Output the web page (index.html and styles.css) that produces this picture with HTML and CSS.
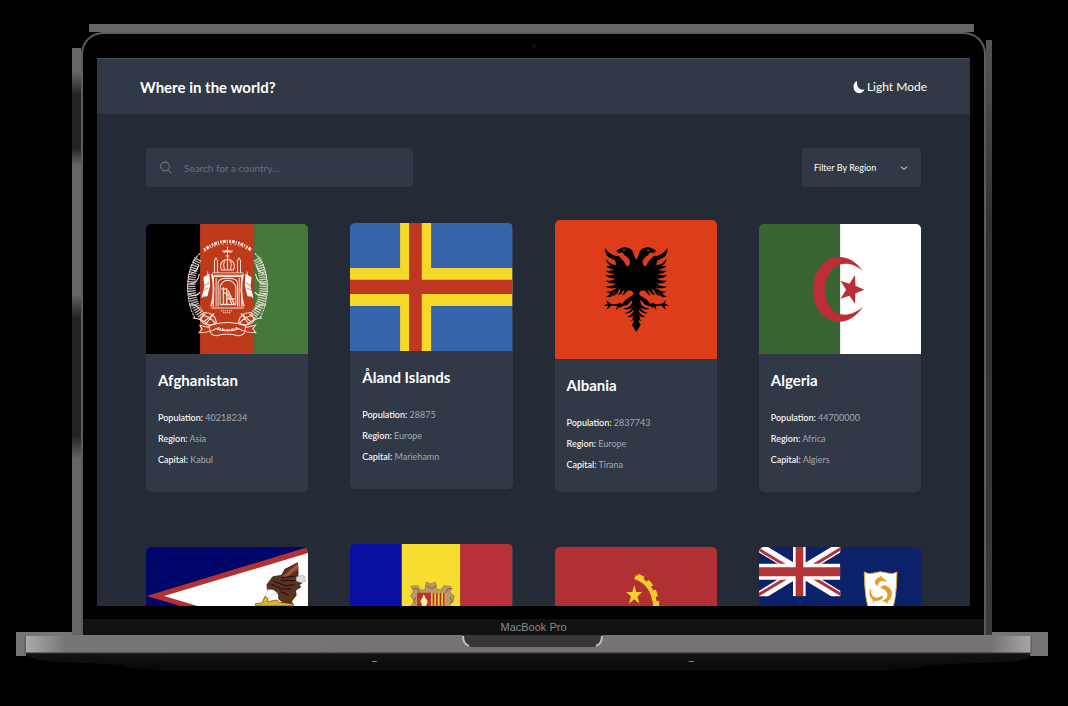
FILE: index.html
```html
<!DOCTYPE html>
<html lang="en">
<head>
<meta charset="utf-8">
<meta name="viewport" content="width=device-width, initial-scale=1">
<title>Where in the world?</title>
<link rel="stylesheet" href="styles.css">
</head>
<body>
<div class="laptop">
  <div class="lid">
    <span class="edge edge-top"></span>
    <span class="edge edge-left"></span>
    <span class="edge edge-right"></span>
    <div class="camera-bar"><span class="camera"></span></div>
    <div class="screen">
      <header class="topbar">
        <h1 class="brand">Where in the world?</h1>
        <button class="mode" type="button">
          <svg class="moon" viewBox="0 0 12 14" aria-hidden="true"><path d="M4 1C1.600 2.200.400 4.400.500 7c.200 3.600 2.700 6.200 5.800 6.200 2.200 0 4.100-1.300 5.200-3.600C7.300 10.400 3.200 7.400 4 1z" fill="#fff"/></svg>
          Light Mode
        </button>
      </header>
      <main class="content">
        <div class="controls">
          <label class="search">
            <svg class="search-icon" viewBox="0 0 12 13" aria-hidden="true"><circle cx="5" cy="5.500" r="4.400"/><path d="M8.200 9 11.200 12.300"/></svg>
            <input type="text" placeholder="Search for a country..." aria-label="Search for a country">
          </label>
          <div class="filter">
            <select aria-label="Filter By Region"><option>Filter By Region</option></select>
            <svg class="chevron" viewBox="0 0 8 6" aria-hidden="true"><path d="M1 1.500 4 4.500 7 1.500"/></svg>
          </div>
        </div>
        <div class="grid">
          <article class="card">
            <svg class="flag" viewBox="18 40 486 391" preserveAspectRatio="none" role="img" aria-label="Flag of Afghanistan">
              <path d="M18 40h163v391H18z" fill="#000"/><path d="M180 40h162v391H180z" fill="#be3a19"/><path d="M342 40h162v391H342z" fill="#45793a"/>
              <g fill="none" stroke="#f3e3dc" stroke-width="3">
                <path d="M192 118q70-52 142 0" stroke-width="9" stroke-dasharray="5 3 9 3 3 4"/>
                <path d="M190 125q70-50 146 0" stroke-width="2" stroke-dasharray="7 5"/>
                <path d="M180 128C136 168 130 260 166 325M344 128c44 40 50 132 14 197" stroke-dasharray="8 2"/>
                <path d="M174 145C142 205 150 275 188 320M350 145c32 60 24 130-14 175" stroke-width="24" stroke-dasharray="4 3" opacity=".8"/>
                <path d="M150 220q22 0 28-30M146 250q22 12 34-5M147 285q18-8 32 12M374 220q-22 0-28-30M378 250q-22 12-34-5M377 285q-18-8-32 12M152 190q18-5 24-26M372 190q-18-5-24-26"/>
                <path d="M246 121h32M250 126q12-6 24 0M262 108v38M256 136h12"/>
                <path d="M244 178q-8-20 8-29 10-5 20 0 16 9 8 29zM262 145v35M253 150q-5 14 0 28M271 150q5 14 0 28"/>
                <path d="M223 186v-34q5-20 9 0v34M292 186v-34q5-20 9 0v34M216 187h94M220 194h86"/>
                <path d="M220 290v-92h84v92M228 288v-86M234 288v-70q0-15 28-15 30 0 30 15v70M297 202v86"/>
                <path d="M215 190q12 50-2 98M309 190q-12 50 2 98" stroke-width="5"/>
                <path d="M240 284v-55q5-19 23-20 18 1 24 20v55M214 293h97"/>
                <path d="M242 282h44M244 235h16v45M247 248h13M250 230v50M264 240l18 40M263 250l12 30M260 265h24" stroke-width="4"/>
                <path d="M203 183v25l-17 54M321 183v25l17 54"/>
                <path d="M242 301h36M249 307h22" stroke-dasharray="4 2"/>
                <path d="M192 306q33 0 37 30-26 18-48-6zM332 306q-33 0-37 30 26 18 48-6z"/>
                <path d="M186 315q23 2 40 23M191 334q18-13 31-25M197 341l24-31M338 315q-23 2-40 23M333 334q-18-13-31-25M327 341l-24-31"/>
                <path d="M158 323q30 2 50 23 54-20 108 0 20-21 50-23M178 344q22 7 32 7M178 344l8 11-9 12q35 0 50-12 35 14 70 0 15 12 50 12l-9-12 8-11q-22 7-32 7M208 346q-2 30 22 30 28-10 64 0 24 0 22-30" />
                <path d="M232 352q30 14 60 0" stroke-width="6" stroke-dasharray="6 2 3 3"/>
              </g>
              <path d="M190 200l18-10 2 35-8 32-17 2 8-30zM334 200l-18-10-2 35 8 32 17 2-8-30z" fill="#fff"/>
              <path d="M193 225l14-8M190 240l14-8M331 225l-14-8M334 240l-14-8" stroke="#be3a19" stroke-width="2"/>
            </svg>
            <div class="card-body">
              <h2>Afghanistan</h2>
              <p><b>Population:</b> 40218234</p><p><b>Region:</b> Asia</p><p><b>Capital:</b> Kabul</p>
            </div>
          </article>
          <article class="card card-centered">
            <svg class="flag flag-short" viewBox="30 42 486 384" preserveAspectRatio="none" role="img" aria-label="Flag of Åland Islands">
              <path d="M30 42h486v384H30z" fill="#3765ac"/><path d="M180 42h93v384h-93zM30 177h486v114H30z" fill="#f6d829"/><path d="M207 42h38v384h-38zM30 212h486v43H30z" fill="#be3720"/>
            </svg>
            <div class="card-body">
              <h2>Åland Islands</h2>
              <p><b>Population:</b> 28875</p><p><b>Region:</b> Europe</p><p><b>Capital:</b> Mariehamn</p>
            </div>
          </article>
          <article class="card">
            <svg class="flag flag-tall" viewBox="43 29 487 418" preserveAspectRatio="none" role="img" aria-label="Flag of Albania">
              <defs>
                <g id="half-eagle">
                  <path d="M288 150q-4-4-8-16-3-16-16-21-12-5-24 1l-9 5-6 5 11-1-7 6 17-2 6 8q12 6 15 14 4 19-9 19-6-14-17-24l-12-8-1 17 2 80 16 7 28 2 5 8-15 22 12-1-6 20 14 15-9 17 13 23z"/>
                  <path d="M238 140q-25-4-36-16-5-5-8-11-3 18 10 28 14 10 34 12z"/>
                  <path d="M234 165q-27 1-38-20 2 17 15 22-9 1-14 0 9 10 24 11-9 5-26 3 12 12 31 9-15 8-31 4 8 13 32 10-14 10-32 7 10 11 32 8-10 10-32 10 13 10 35 2-9 13-34 14 13 8 37-3l8-12z"/>
                  <path d="M236 138v90h-11v-10l5-6v-13l-9 0 9-6v-14l-9 0 6-16-6-20z"/>
                  <path d="M212 243q-4 12-16 16 11 7 22-7l8-17zM228 232q-2 17-14 26 15-1 22-22zM241 232q-3 15-10 23 14-2 19-20zM254 232q-3 16-10 24 14-5 19-22z"/>
                  <path d="M274 257l-17 10-14 15-4-5-17 8 16 5-5 6 10-7 18-5 14-17z"/>
                  <path d="M240 284l-30-3-13-11 4 10-12 7 14 0-5 13 14-14 18 2-5 14 12-15z"/>
                  <path d="M278 270q-5 22-30 25 14 8 32-7zM279 283q-6 21-27 26 18 6 29-15zM281 297q-4 18-21 23 14 5 24-13zM285 309q-2 17-15 23 11 1 18-11z"/>
                </g>
              </defs>
              <path d="M43 29h487v418H43z" fill="#dd3d1a"/>
              <use href="#half-eagle"/><use href="#half-eagle" transform="translate(574 0) scale(-1 1)"/>
              <path d="M287 322l13 22-13 22-13-22z"/>
              <path d="M247 120h8M319 120h8" stroke="#dd3d1a" stroke-width="3"/>
            </svg>
            <div class="card-body card-body-tight">
              <h2>Albania</h2>
              <p><b>Population:</b> 2837743</p><p><b>Region:</b> Europe</p><p><b>Capital:</b> Tirana</p>
            </div>
          </article>
          <article class="card">
            <svg class="flag" viewBox="24 41 488 390" preserveAspectRatio="none" role="img" aria-label="Flag of Algeria">
              <path d="M24 41h245v390H24z" fill="#396434"/><path d="M268 41h244v390H268z" fill="#fff"/>
              <path d="M336 183C312 145 275 132 242 144c-36 14-56 52-56 94s20 80 56 92c34 12 70-2 96-42-28 26-61 32-84 17-20-13-31-38-31-67s11-56 31-69c24-15 57-11 82 14z" fill="#bb2e36"/>
              <path d="M341 238l-27 11-1 32-17-25-27 9 17-27-17-27 27 9 17-26 1 32z" fill="#bb2e36"/>
            </svg>
            <div class="card-body">
              <h2>Algeria</h2>
              <p><b>Population:</b> 44700000</p><p><b>Region:</b> Africa</p><p><b>Capital:</b> Algiers</p>
            </div>
          </article>
          <article class="card">
            <svg class="flag" viewBox="18 36 486 390" preserveAspectRatio="none" role="img" aria-label="Flag of American Samoa">
              <path d="M18 36h486v390H18z" fill="#01066a"/><path d="M504 36v290L20 183 504 36z" fill="#b23232"/><path d="M504 54v258L72 183z" fill="#fff"/>
              <path d="M472 83l-38 20-10 18-26 4-18 24 2 16 18 2 15 11 1 15 10 7-4 10 36-1-4-10 14-18-2-15 16-10-6-6 9-6-7-5 4-9-10-4 2-10z" fill="#5b321d" stroke="#20120b" stroke-width="2"/>
              <path d="M472 86l-44 37 7 7 40-30z" fill="#a15335"/>
              <path d="M424 128l45-5M421 136l44 1M400 138l35 14 27-3M393 147l32 16 26-2M421 170l25 10" stroke="#1e110b" stroke-width="3" fill="none"/>
              <path d="M468 125l19-4 8 6-4 5 6 5-12 7-17-5z" fill="#ddd" stroke="#555"/>
              <path d="M383 163l17 2 13 10-18 3-10 13-11-2z" fill="#fff" stroke="#888"/>
              <path d="M374 184l9 6-1 10 28-5 8 7 42 5v6H346v-7l20-2z" fill="#e0b329" stroke="#58420d" stroke-width="2"/>
            </svg>
          </article>
          <article class="card">
            <svg class="flag flag-medium" viewBox="630 27 486 399" preserveAspectRatio="none" role="img" aria-label="Flag of Andorra">
              <path d="M630 27h156v399H630z" fill="#0710a0"/><path d="M785 27h176v399H785z" fill="#f8dd31"/><path d="M960 27h156v399H960z" fill="#b83038"/>
              <path d="M813 154l20-2 8 14 14-1 3-24 14 6 14-6 4 21 13 3 8-13 21 2-2 17 12 12-3 17-11 5 10 18-20 30H824l-25-32 17-11 6-13-11-14 9-13z" fill="#b99b69" stroke="#8c7147" stroke-width="2"/>
              <path d="M818 162q18-6 20 13M937 162q-18-6-20 13M860 151q14 18 28 0M828 187q-12 12-2 19M929 187q12 12 2 19" fill="none" stroke="#80643b" stroke-width="3"/>
              <path d="M831 173h42v80h-42z" fill="#bd342c"/><path d="M873 173h43v80h-43z" fill="#efc93b"/>
              <path d="M880 173v80M890 173v80M901 173v80M911 173v80" stroke="#ad3026" stroke-width="5"/>
              <path d="M845 207q-8-8 1-17l5-12 5 11q11 10 3 20l-3 10h-9z" fill="#fff0a0"/>
            </svg>
          </article>
          <article class="card">
            <svg class="flag" viewBox="43 36 487 390" preserveAspectRatio="none" role="img" aria-label="Flag of Angola">
              <path d="M43 36h487v195H43z" fill="#b03033"/><path d="M43 231h487v195H43z" fill="#000"/>
              <g fill="none" stroke="#f4c92b"><path d="M283 126q58 20 61 94" stroke-width="12"/><path d="M291 121q60 25 59 95" stroke-width="11" stroke-dasharray="20 14"/></g>
              <path d="M281 150l6 21h18l-14 13 5 22-15-13-16 13 6-22-15-13h19z" fill="#f4d02b"/>
            </svg>
          </article>
          <article class="card">
            <svg class="flag" viewBox="655 36 487 390" preserveAspectRatio="none" role="img" aria-label="Flag of Anguilla">
              <defs><clipPath id="canton"><path d="M655 36h244v148H655z"/></clipPath></defs>
              <path d="M655 36h487v390H655z" fill="#0b216a"/>
              <g clip-path="url(#canton)">
                <path d="M655 36l244 148M899 36L655 184" stroke="#fff" stroke-width="28"/>
                <path d="M650 40l120 73M903 180l-120-73M908 36l-124 76M646 184l125-75" stroke="#b23237" stroke-width="9"/>
                <path d="M757 36h38v148h-38zM655 86h244v48H655z" fill="#fff"/><path d="M765 36h23v148h-23zM655 97h244v27H655z" fill="#b23237"/>
              </g>
              <path d="M971 111q14 9 28 3l21-4 21 4q14 6 28-3-1 93-19 122-16 17-30 23-14-6-30-23-18-29-19-122z" fill="#fff" stroke="#d9a83a" stroke-width="3"/>
              <g fill="#e39d2c"><path d="M1003 146q-1-16 14-20l5-4 2 5 18 13-16-2q-11 1-13 9l-4 6z"/><path d="M1026 151q23 1 28 21 1 18-13 27l1 8-8-7-10-1 11-7q10-8 3-20-6-10-19-12z"/><path d="M985 161l7 5q-2 14 8 20 11 6 26-5l1 9q-14 11-24 7l-6 7-1-10q-14-13-8-25z"/></g>
            </svg>
          </article>
        </div>
      </main>
    </div>
    <div class="chin">MacBook Pro</div>
  </div>
  <svg class="base" viewBox="16 632 1032 44" preserveAspectRatio="none" aria-hidden="true">
    <defs>
      <linearGradient id="metal"><stop offset="0" stop-color="#aaa"/><stop offset=".04" stop-color="#777576"/><stop offset=".5" stop-color="#777274"/><stop offset=".96" stop-color="#777274"/><stop offset="1" stop-color="#aaa6a8"/></linearGradient>
      <linearGradient id="under" x2="0" y2="1"><stop offset="0" stop-color="#151315"/><stop offset="1" stop-color="#080708"/></linearGradient>
    </defs>
    <path d="M24 652h1010q-3 10-32 10l-72 3q-20 6-60 6H180q-40 0-60-6l-56-3q-34 0-40-10z" fill="url(#under)"/>
    <path d="M16 632h1032v24h-18v-3H26v3H16z" fill="#777576"/>
    <path d="M26 636h1005v17H26z" fill="url(#metal)"/>
    <path d="M26 653h1005" stroke="#343334"/>
    <path d="M25 636v18M1031 636v18" stroke="#555"/>
    <path d="M462 635h141q-1 12-10 12H472q-9 0-10-12z" fill="#393639"/>
    <path d="M463 636q0 8 6 10M602 636q0 8-6 10" stroke="#c0bdc0" stroke-width="2" fill="none"/>
    <path d="M371 662q3-2 7 0zM688 662q3-2 7 0z" fill="#999"/>
  </svg>
</div>
</body>
</html>
```
FILE: styles.css
```css
* { box-sizing: border-box; }

body {
  margin: 0;
  padding: 32px 20px 24px 16px;
  background: #000;
  color: #fff;
  font-family: Lato, "Open Sans", sans-serif;
}

h1, h2, p { margin: 0; }

button, input, select { font: inherit; color: inherit; }

/* Laptop */
.lid {
  position: relative;
  z-index: 1;
  margin: 0 62px 0 65px;
  padding: 0 14px;
  border: 2px solid #5c5c5c;
  border-bottom: 0;
  border-radius: 22px 22px 0 0;
  background: #000;
}

.edge { position: absolute; }

.edge-top {
  top: -10px;
  left: 6px;
  right: 10px;
  height: 8px;
  background: #666;
}

.edge-left {
  top: 14px;
  left: -11px;
  bottom: 0;
  width: 9px;
  background: linear-gradient(#666 0 4%, #222 8% 17%, #666 20% 42%, #222 46% 66%, #666 70%);
}

.edge-right {
  top: 6px;
  right: -8px;
  bottom: 0;
  width: 6px;
  background: linear-gradient(#555, #333 30%, #3a3a3a);
}

.camera-bar {
  display: flex;
  align-items: center;
  justify-content: center;
  height: 24px;
}

.camera {
  width: 4px;
  height: 4px;
  border-radius: 50%;
  background: #12141a;
}

.chin {
  margin: 13px -14px 0;
  background: #111012;
  color: #8c8a8c;
  font: 11px/16px "Liberation Sans", sans-serif;
  text-align: center;
}

.base {
  display: block;
  width: 100%;
  height: 44px;
  margin-top: -3px;
}

/* App */
.screen {
  aspect-ratio: 873 / 548;
  overflow: hidden;
  border-top: 1px solid #484a4e;
  background: #242b36;
}

.topbar {
  display: flex;
  align-items: center;
  justify-content: space-between;
  height: 55px;
  padding: 0 43px;
  background: #303945;
  box-shadow: 0 1px 1px #212a32;
}

.brand {
  font-size: 15px;
  line-height: 24px;
}

.mode {
  display: flex;
  align-items: center;
  gap: 2px;
  padding: 0;
  border: 0;
  background: none;
  font-size: 12px;
}

.moon { width: 12px; height: 14px; }

.content { padding: 34px 49px; }

.controls {
  display: flex;
  justify-content: space-between;
  margin-bottom: 33px;
}

.search {
  display: flex;
  align-items: center;
  gap: 12px;
  width: 267px;
  height: 39px;
  padding: 0 14px;
  border-radius: 4px;
  background: #303945;
}

.search-icon {
  width: 12px;
  height: 13px;
  fill: none;
  stroke: #7c848e;
}

.search input {
  flex: 1;
  min-width: 0;
  padding: 0;
  border: 0;
  outline: 0;
  background: none;
  font-size: 10px;
}

.search input::placeholder { color: #69727e; }

.filter { position: relative; }

.filter select {
  display: block;
  width: 119px;
  height: 39px;
  padding: 0 12px;
  border: 0;
  border-radius: 4px;
  background: #303945;
  appearance: none;
  font-size: 9px;
}

.chevron {
  position: absolute;
  top: 17px;
  right: 13px;
  width: 8px;
  height: 6px;
  fill: none;
  stroke: #fff;
  pointer-events: none;
}

.grid {
  display: grid;
  grid-template-columns: repeat(4, 1fr);
  gap: 52px 42px;
  align-items: end;
}

.card {
  overflow: hidden;
  border-radius: 5px;
  background: #303945;
}

.card-centered { align-self: center; }

.flag {
  display: block;
  width: 100%;
  height: 130px;
}

.flag-short { height: 128px; }
.flag-medium { height: 133px; }
.flag-tall { height: 139px; }

.card-body { padding: 16px 12px 22px; }

.card-body-tight { padding-bottom: 17px; }

.card h2 {
  margin-bottom: 17px;
  font-size: 15px;
  line-height: 20px;
}

.card p {
  color: #a3a9b1;
  font-size: 9px;
  line-height: 21px;
}

.card b {
  color: #fff;
  font-weight: 500;
}
```
